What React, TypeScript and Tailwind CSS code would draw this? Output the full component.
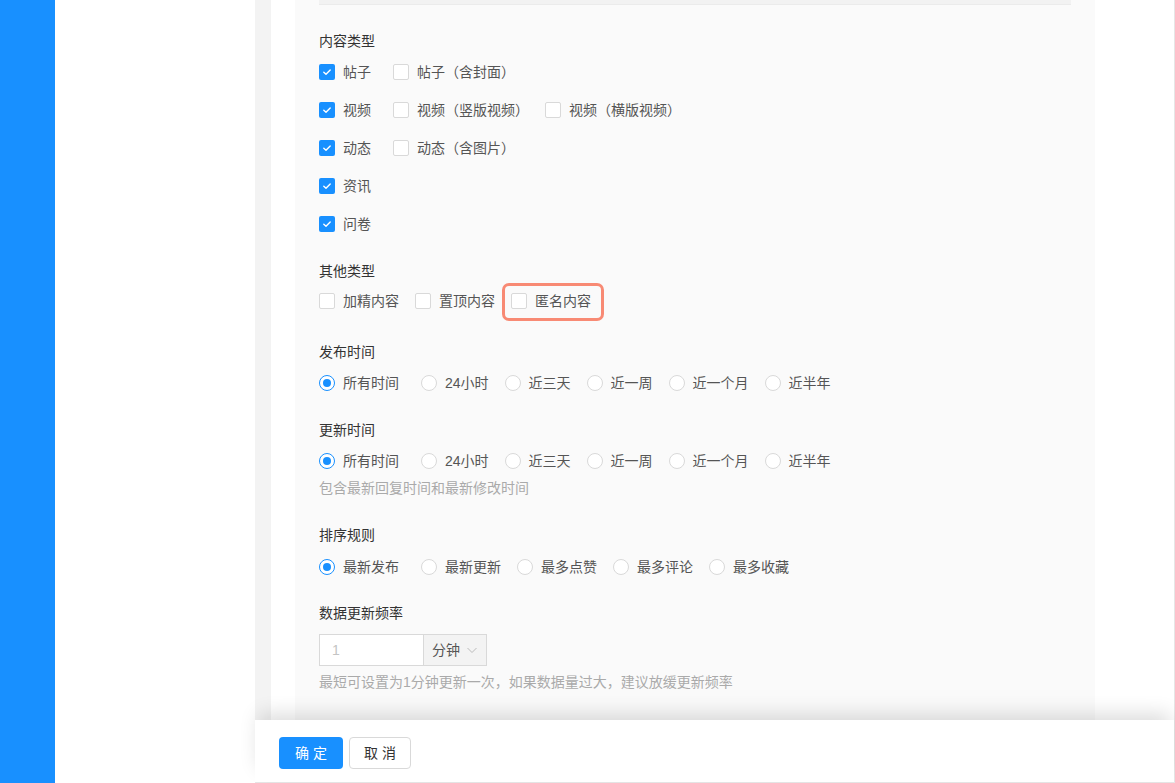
import React from "react";

const contentRows = [
    [
        { label: "帖子", checked: true },
        { label: "帖子（含封面）", checked: false },
    ],
    [
        { label: "视频", checked: true },
        { label: "视频（竖版视频）", checked: false },
        { label: "视频（横版视频）", checked: false },
    ],
    [
        { label: "动态", checked: true },
        { label: "动态（含图片）", checked: false },
    ],
    [{ label: "资讯", checked: true }],
    [{ label: "问卷", checked: true }],
];

const timeOptions = ["所有时间", "24小时", "近三天", "近一周", "近一个月", "近半年"];
const sortOptions = ["最新发布", "最新更新", "最多点赞", "最多评论", "最多收藏"];

function Checkbox({ checked }: { checked: boolean }) {
    if (checked) {
        return (
            <span className="flex h-4 w-4 shrink-0 items-center justify-center rounded-[2px] bg-[#1890ff]">
                <svg viewBox="0 0 16 16" className="h-4 w-4">
                    <path d="M4.8 8.2 L7 10.3 L11.2 5.9" fill="none" stroke="#fff" strokeWidth="1.4" strokeLinecap="round" strokeLinejoin="round" />
                </svg>
            </span>
        );
    }
    return <span className="h-4 w-4 shrink-0 rounded-[2px] border border-[#d9d9d9] bg-white" />;
}

function Radio({ checked }: { checked: boolean }) {
    return (
        <span
            className={`flex h-4 w-4 shrink-0 items-center justify-center rounded-full border bg-white ${checked ? "border-[#1890ff]" : "border-[#d9d9d9]"}`}
        >
            {checked && <span className="h-2 w-2 rounded-full bg-[#1890ff]" />}
        </span>
    );
}

function CheckItem({ label, checked, className = "" }: { label: string; checked: boolean; className?: string }) {
    return (
        <label className={`flex h-[22px] items-center gap-2 ${className}`}>
            <Checkbox checked={checked} />
            <span className="whitespace-nowrap text-[#555]">{label}</span>
        </label>
    );
}

function RadioGroup({ options }: { options: string[] }) {
    return (
        <div className="flex h-[22px] items-center gap-4">
            {options.map((o, i) => (
                <label key={o} className={`flex items-center gap-2 ${i === 0 ? "mr-[6px]" : ""}`}>
                    <Radio checked={i === 0} />
                    <span className="whitespace-nowrap text-[#555]">{o}</span>
                </label>
            ))}
        </div>
    );
}

function Title({ children, className = "" }: { children: React.ReactNode; className?: string }) {
    return <div className={`h-[22px] text-[#333] ${className}`}>{children}</div>;
}

export default function App() {
    return (
        <div className="flex h-[783px] w-[1175px] overflow-hidden bg-white font-[Liberation_Sans,Noto_Sans_CJK_SC,sans-serif] text-[14px] leading-[22px]">
            <aside className="w-[55px] shrink-0 bg-[#1890ff]" />
            <div className="w-[200px] shrink-0 bg-white" />

            <main className="flex min-w-0 flex-1 flex-col border-r border-b border-[#e6e6e6]">
                <div className="flex min-h-0 flex-1">
                    <div className="w-4 shrink-0 bg-[#f3f3f3]" />
                    <div className="w-6 shrink-0 bg-white" />
                    <div className="w-[800px] shrink-0 overflow-hidden bg-[#fafafa] px-6">
                        <div className="h-[5px] border-b border-[#ebebeb] bg-[#f2f2f2]" />

                        {/* 内容类型 */}
                        <Title className="mt-[25px]">内容类型</Title>
                        <div className="mt-[9px] flex flex-col gap-4">
                            {contentRows.map((row, r) => (
                                <div key={r} className="flex gap-4">
                                    {row.map((item, i) => (
                                        <CheckItem
                                            key={item.label}
                                            label={item.label}
                                            checked={item.checked}
                                            className={i === 0 ? "mr-[6px]" : ""}
                                        />
                                    ))}
                                </div>
                            ))}
                        </div>

                        {/* 其他类型 */}
                        <Title className="mt-[25px]">其他类型</Title>
                        <div className="mt-2 flex gap-4">
                            <CheckItem label="加精内容" checked={false} />
                            <CheckItem label="置顶内容" checked={false} />
                            <div className="relative">
                                <CheckItem label="匿名内容" checked={false} />
                                <span className="pointer-events-none absolute -top-[7px] -right-[13px] -bottom-[9px] -left-[9px] rounded-[7px] border-[3px] border-[#f88a74]" />
                            </div>
                        </div>

                        {/* 发布时间 */}
                        <Title className="mt-[29px]">发布时间</Title>
                        <div className="mt-[9px]">
                            <RadioGroup options={timeOptions} />
                        </div>

                        {/* 更新时间 */}
                        <Title className="mt-[25px]">更新时间</Title>
                        <div className="mt-[9px]">
                            <RadioGroup options={timeOptions} />
                        </div>
                        <div className="mt-[5px] text-[#aaa]">包含最新回复时间和最新修改时间</div>

                        {/* 排序规则 */}
                        <Title className="mt-[25px]">排序规则</Title>
                        <div className="mt-[10px]">
                            <RadioGroup options={sortOptions} />
                        </div>

                        {/* 数据更新频率 */}
                        <Title className="mt-6">数据更新频率</Title>
                        <div className="mt-[10px] flex h-8">
                            <div className="flex w-[105px] items-center border border-[#d9d9d9] bg-white pl-3 text-[#c4c4c4]">1</div>
                            <div className="flex w-[63px] items-center justify-center gap-1.5 border border-l-0 border-[#d9d9d9] bg-[#f3f3f3] text-[#555]">
                                <span>分钟</span>
                                <svg viewBox="0 0 12 12" className="h-3 w-3">
                                    <path d="M1.5 4 L6 8.5 L10.5 4" fill="none" stroke="#bbb" strokeWidth="1" />
                                </svg>
                            </div>
                        </div>
                        <div className="mt-[5px] whitespace-nowrap text-[#aaa]">
                            最短可设置为1分钟更新一次，如果数据量过大，建议放缓更新频率
                        </div>
                    </div>
                    <div className="flex-1 bg-white" />
                </div>

                <footer className="relative z-10 flex h-[62px] shrink-0 gap-1.5 bg-white pl-6 pt-[17px] shadow-[0_-10px_20px_-4px_rgba(0,0,0,0.14)]">
                    <button className="h-8 w-16 rounded-[4px] bg-[#1890ff] pl-1 tracking-[4px] text-white">
                        确定
                    </button>
                    <button className="h-8 w-[62px] rounded-[4px] border border-[#d9d9d9] bg-white pl-1 tracking-[4px] text-[#333]">
                        取消
                    </button>
                </footer>
            </main>
        </div>
    );
}
